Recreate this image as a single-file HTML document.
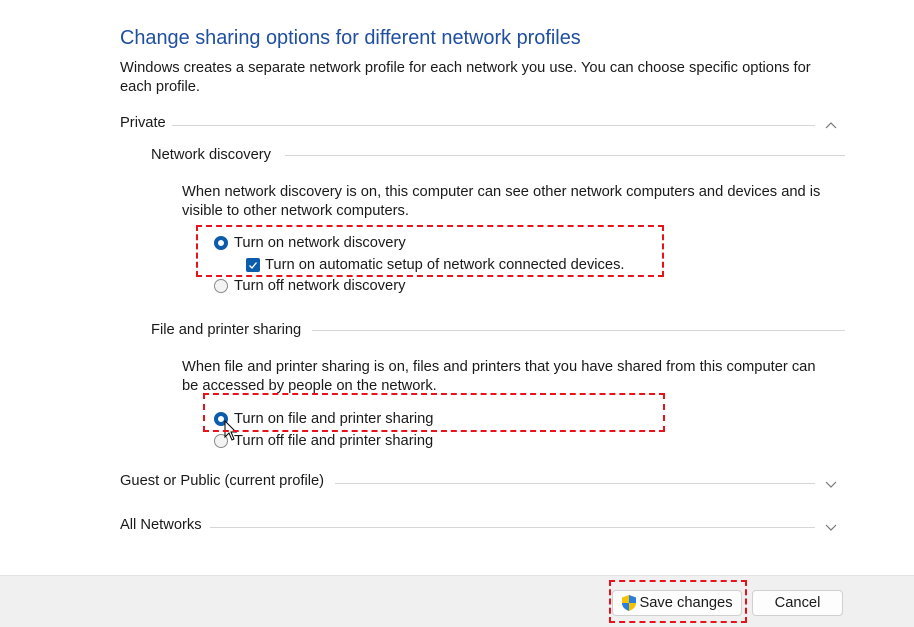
<!DOCTYPE html>
<html><head><meta charset="utf-8"><style>
body{margin:0;width:914px;height:626px;background:#fff;position:relative;overflow:hidden;font-family:"Liberation Sans",sans-serif;font-size:14.7px;color:#1a1a1a}
.t{position:absolute;white-space:nowrap;line-height:19px}
.ln{position:absolute;height:1px;background:#d6d6d6}
.red{position:absolute;border:2px dashed #e8121b;box-sizing:border-box}
.rad{position:absolute;width:14px;height:14px;border-radius:50%;box-sizing:border-box}
.on{background:#fff;border:4px solid #0b5cad}
.off{border:1px solid #8a8a8a;background:#f3f3f3}
.chev{position:absolute;width:12px;height:8px}
.btn{position:absolute;height:26px;border:1px solid #d0d0d0;border-radius:4px;background:#fdfdfd;box-sizing:border-box;text-align:center;line-height:24px;font-size:14.7px}
</style></head><body>
<div class="t" style="left:120px;top:26px;font-size:19.9px;line-height:24px;color:#1f4fa0">Change sharing options for different network profiles</div>
<div class="t" style="left:120px;top:59px">Windows creates a separate network profile for each network you use. You can choose specific options for</div>
<div class="t" style="left:120px;top:78px">each profile.</div>

<div class="t" style="left:120px;top:114px">Private</div>
<div class="ln" style="left:172px;top:125px;width:643px"></div>
<svg class="chev" style="left:825px;top:121px" viewBox="0 0 12 8"><path d="M1 7L6 2L11 7" fill="none" stroke="#777" stroke-width="1.2"/></svg>

<div class="t" style="left:151px;top:146px">Network discovery</div>
<div class="ln" style="left:285px;top:155px;width:560px"></div>
<div class="t" style="left:182px;top:183px">When network discovery is on, this computer can see other network computers and devices and is</div>
<div class="t" style="left:182px;top:202px">visible to other network computers.</div>
<div class="rad on" style="left:214px;top:236px"></div>
<div class="t" style="left:234px;top:234px">Turn on network discovery</div>
<div style="position:absolute;left:246px;top:258px;width:14px;height:14px;background:#0b5cad;border-radius:2px"><svg width="14" height="14" viewBox="0 0 14 14"><path d="M3.5 7.5L6 10L10.5 4.5" fill="none" stroke="#fff" stroke-width="1.3"/></svg></div>
<div class="t" style="left:265px;top:256px">Turn on automatic setup of network connected devices.</div>
<div class="rad off" style="left:214px;top:279px"></div>
<div class="t" style="left:234px;top:277px">Turn off network discovery</div>
<div class="red" style="left:196px;top:225px;width:468px;height:52px"></div>

<div class="t" style="left:151px;top:321px">File and printer sharing</div>
<div class="ln" style="left:312px;top:330px;width:533px"></div>
<div class="t" style="left:182px;top:358px">When file and printer sharing is on, files and printers that you have shared from this computer can</div>
<div class="t" style="left:182px;top:377px">be accessed by people on the network.</div>
<div class="rad on" style="left:214px;top:412px"></div>
<div class="t" style="left:234px;top:410px">Turn on file and printer sharing</div>
<div class="rad off" style="left:214px;top:434px"></div>
<div class="t" style="left:234px;top:432px">Turn off file and printer sharing</div>
<svg style="position:absolute;left:224px;top:420px" width="14" height="22" viewBox="0 0 14 22"><path d="M1 1L1 17L5 13L8 20L10 19L7 12L12 12Z" fill="#fff" stroke="#000" stroke-width="1"/></svg>
<div class="red" style="left:203px;top:393px;width:462px;height:39px"></div>

<div class="t" style="left:120px;top:472px">Guest or Public (current profile)</div>
<div class="ln" style="left:335px;top:483px;width:480px"></div>
<svg class="chev" style="left:825px;top:481px" viewBox="0 0 12 8"><path d="M1 1L6 6L11 1" fill="none" stroke="#777" stroke-width="1.2"/></svg>
<div class="t" style="left:120px;top:516px">All Networks</div>
<div class="ln" style="left:210px;top:527px;width:605px"></div>
<svg class="chev" style="left:825px;top:524px" viewBox="0 0 12 8"><path d="M1 1L6 6L11 1" fill="none" stroke="#777" stroke-width="1.2"/></svg>

<div style="position:absolute;left:0;top:575px;width:914px;height:51px;background:#f0f0f0;border-top:1px solid #e3e3e3"></div>
<div class="btn" style="left:612px;top:590px;width:130px;padding-left:18px">Save changes</div>
<svg style="position:absolute;left:620px;top:594px" width="18" height="18" viewBox="0 0 18 18"><path d="M9 1L16 3.5V9C16 13 13 15.5 9 17C5 15.5 2 13 2 9V3.5Z" fill="#f5c400"/><path d="M9 1L16 3.5V9H9Z" fill="#2b7de0"/><path d="M9 9H2C2 13 5 15.5 9 17Z" fill="#2b7de0"/></svg>
<div class="btn" style="left:752px;top:590px;width:91px">Cancel</div>
<div class="red" style="left:609px;top:580px;width:138px;height:43px"></div>
</body></html>
